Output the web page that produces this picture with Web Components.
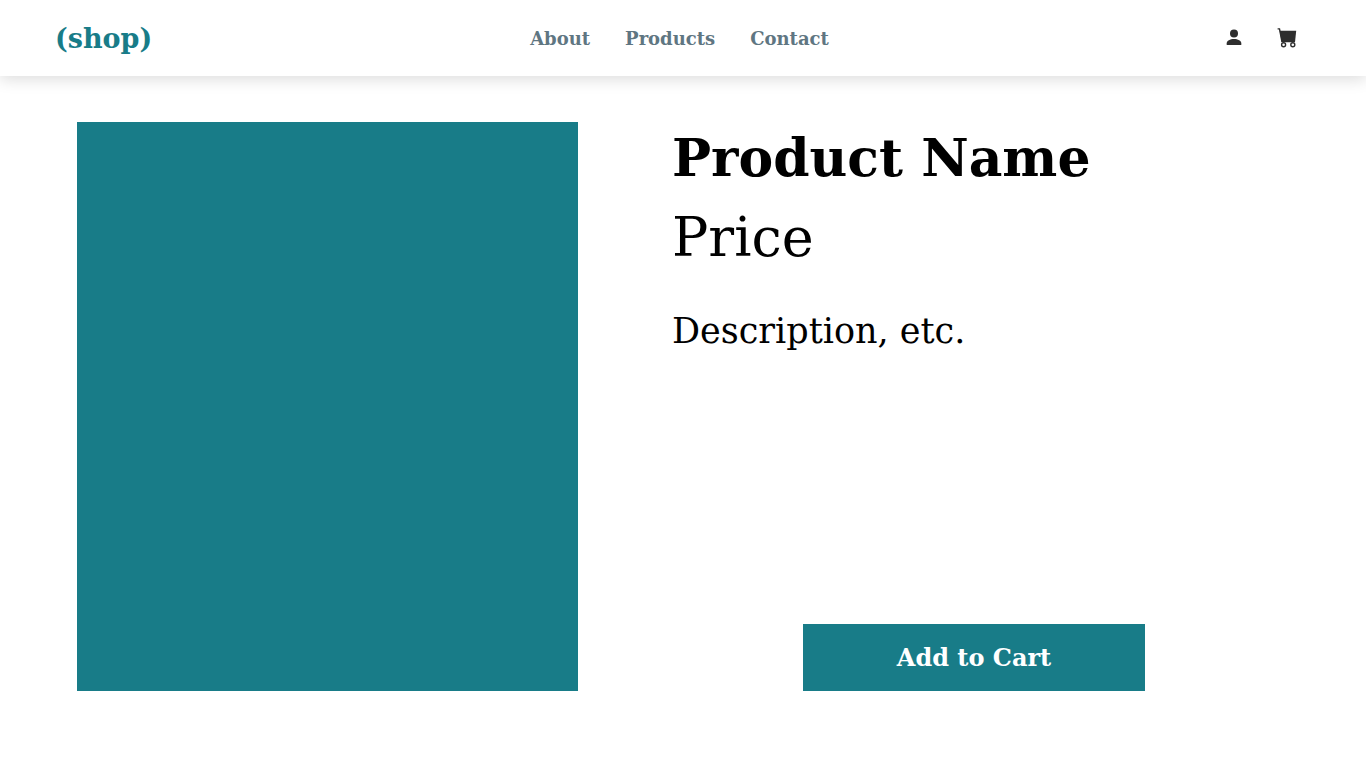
<!DOCTYPE html>
<html lang="en">
<head>
<meta charset="utf-8">
<meta name="viewport" content="width=device-width, initial-scale=1">
<title>(shop) – Product</title>
<style>
  :root { --teal: #187c88; --slate: #5f7682; --ink: #2e2e2e; }
  body { margin: 0; background: #fff; color: #000; font-family: "DejaVu Serif", "Liberation Serif", serif; }
</style>
</head>
<body>
<shop-header>
  <shop-link href="#about">About</shop-link>
  <shop-link href="#products">Products</shop-link>
  <shop-link href="#contact">Contact</shop-link>
</shop-header>
<product-page>
  <span slot="name">Product Name</span>
  <span slot="price">Price</span>
  <span slot="description">Description, etc.</span>
  <cart-button slot="action">Add to Cart</cart-button>
</product-page>
<script>
  class ShadowElement extends HTMLElement {
    constructor() {
      super();
      this.attachShadow({ mode: "open" }).innerHTML = this.constructor.markup;
    }
  }

  class ShopLink extends ShadowElement {
    static markup = `
      <style>
        :host { display: block; }
        a { color: var(--slate); font-size: 18px; font-weight: 700; line-height: 24px; text-decoration: none; }
      </style>
      <a><slot></slot></a>`;
    connectedCallback() {
      this.shadowRoot.querySelector("a").href = this.getAttribute("href");
    }
  }
  customElements.define("shop-link", ShopLink);

  class ShopHeader extends ShadowElement {
    static markup = `
      <style>
        :host { display: block; background: #fff; box-shadow: 0 4px 14px rgba(0, 0, 0, .13); }
        header { display: grid; grid-template-columns: 475fr auto 468fr; align-items: center; height: 76px; padding: 0 69px 0 55px; }
        .logo, nav { padding-top: 2px; }
        .logo { justify-self: start; color: var(--teal); font-size: 27px; font-weight: 700; line-height: 36px; text-decoration: none; }
        nav { display: flex; gap: 35px; }
        .tools { display: flex; justify-content: flex-end; gap: 33px; }
        button { display: block; padding: 0; border: 0; background: none; color: var(--ink); cursor: pointer; }
        svg { display: block; width: 20px; height: 20px; }
      </style>
      <header>
        <a class="logo" href="#home">(shop)</a>
        <nav aria-label="Main"><slot></slot></nav>
        <div class="tools">
          <button type="button" aria-label="Account">
            <svg viewBox="0 0 20 20" fill="currentColor"><circle cx="10" cy="5.5" r="4"/><path d="M2.7 17v-1.8c0-2.5 3.4-4.2 7.3-4.2s7.3 1.7 7.3 4.2V17z"/></svg>
          </button>
          <button type="button" aria-label="Cart">
            <svg viewBox="0 0 20 20" fill="none" stroke="currentColor"><path fill="currentColor" stroke="none" d="M2.6 2.8h16.6l-1.2 11.4H4.8z"/><path stroke-width="1.4" d="M.6.9h1.9L5 14"/><circle cx="6.6" cy="16.8" r="2" stroke-width="1.4"/><circle cx="15.8" cy="16.8" r="2" stroke-width="1.4"/></svg>
          </button>
        </div>
      </header>`;
  }
  customElements.define("shop-header", ShopHeader);

  class CartButton extends ShadowElement {
    static markup = `
      <style>
        :host { display: block; }
        button { display: block; width: 100%; min-height: 67px; padding: 16px; border: 0; background: var(--teal); color: #fff; font: 700 24px/32px "DejaVu Serif", "Liberation Serif", serif; cursor: pointer; }
      </style>
      <button type="button"><slot></slot></button>`;
  }
  customElements.define("cart-button", CartButton);

  class ProductPage extends ShadowElement {
    static markup = `
      <style>
        :host { display: block; }
        main { display: grid; grid-template-columns: 501fr 604fr; gap: 94px; padding: 46px 90px 77px 77px; }
        .photo { min-height: 569px; background: var(--teal); }
        .info { display: flex; flex-direction: column; }
        h1, p { margin: 0; white-space: nowrap; }
        h1 { font-size: 52px; font-weight: 700; line-height: 72px; }
        .price { margin-top: 8px; font-size: 54px; line-height: 72px; }
        .description { margin-top: 33px; font-size: 35px; line-height: 48px; }
        .action { width: 342px; max-width: 100%; margin-top: auto; align-self: center; }
      </style>
      <main>
        <div class="photo" role="img" aria-label="Product photo"></div>
        <section class="info">
          <h1><slot name="name"></slot></h1>
          <p class="price"><slot name="price"></slot></p>
          <p class="description"><slot name="description"></slot></p>
          <div class="action"><slot name="action"></slot></div>
        </section>
      </main>`;
  }
  customElements.define("product-page", ProductPage);
</script>
</body>
</html>
